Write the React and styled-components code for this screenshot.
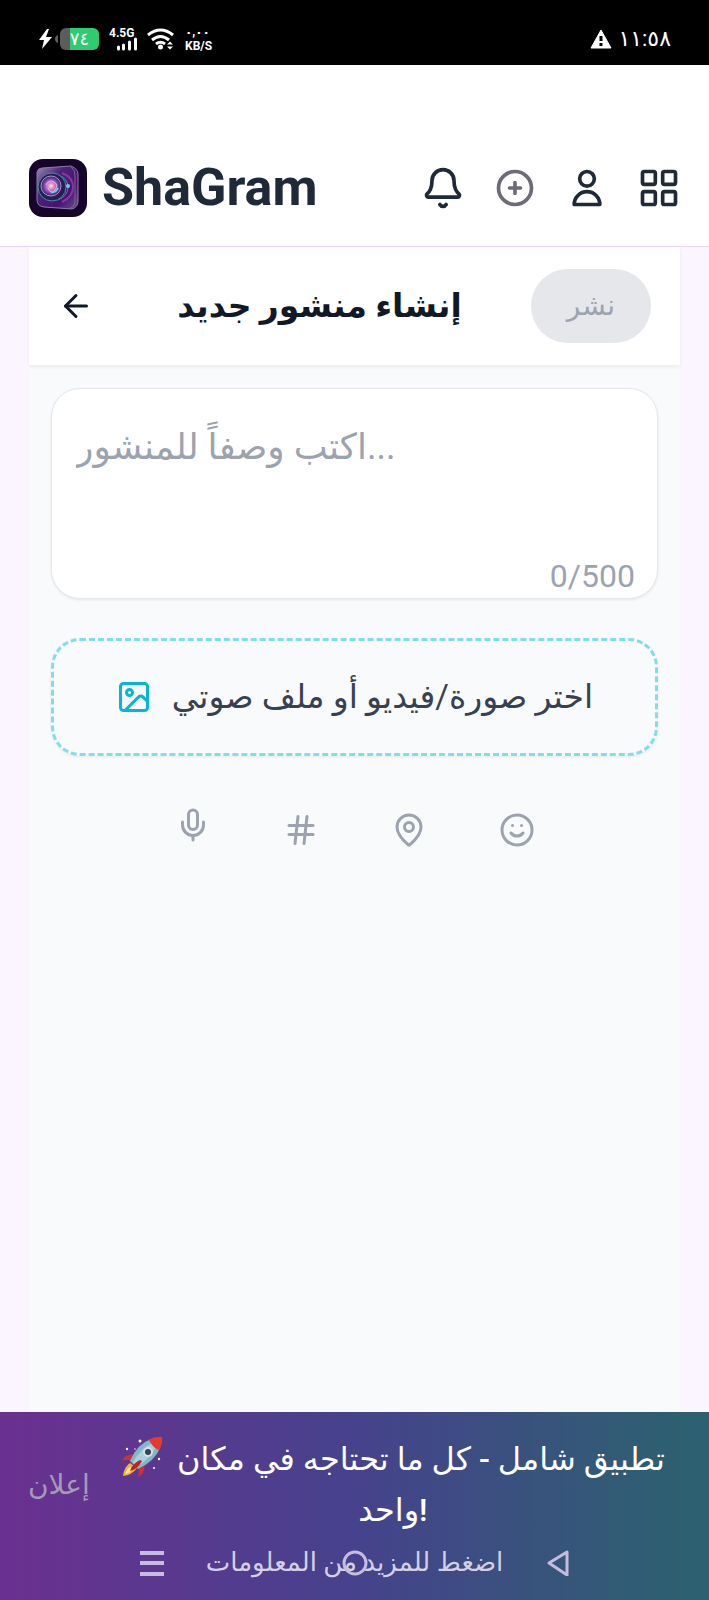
import React, { useState } from 'react';
import styled, { createGlobalStyle } from 'styled-components';
import { ArrowLeft, Bell, Hash, Image, LayoutGrid, MapPin, Mic, Smile } from 'lucide-react';

const GlobalStyle = createGlobalStyle`
  * {
    box-sizing: border-box;
  }
  body {
    margin: 0;
    background: #faf5ff;
    font-family: Roboto, 'Noto Sans', 'DejaVu Sans', sans-serif;
    font-size: 32px;
    line-height: 52px;
  }
  svg {
    display: block;
    flex-shrink: 0;
  }
`;

const Page = styled.div`
  min-height: 100vh;
  display: flex;
  flex-direction: column;
`;

const StatusBar = styled.div`
  height: 65px;
  padding: 12px 38px 0;
  display: flex;
  align-items: center;
  justify-content: space-between;
  background: #000;
  color: #fff;
`;

const StatusGroup = styled.div`
  display: flex;
  align-items: center;
  gap: ${props => props.$gap}px;
`;

const Battery = styled.div`
  width: 39px;
  height: 22px;
  border-radius: 6px;
  background: linear-gradient(to right, #5c5c5c 10px, #2ecc71 10px);
  font-size: 18px;
  line-height: 22px;
  text-align: center;
`;

const Network = styled.div`
  display: flex;
  flex-direction: column;
  font-size: 12px;
  font-weight: 700;
  line-height: 14px;
`;

const Clock = styled.time`
  font-size: 22px;
  line-height: 24px;
`;

const Header = styled.header`
  padding: 94px 28px 29px 29px;
  display: flex;
  align-items: center;
  justify-content: space-between;
  background: #fff;
  border-bottom: 1px solid #e9d5ff;
`;

const Brand = styled.div`
  display: flex;
  align-items: center;
  gap: 15px;
  color: #1f2937;
  font-size: 52px;
  font-weight: 700;
  line-height: 58px;
`;

const Actions = styled.nav`
  display: flex;
  gap: 28px;
`;

const IconButton = styled.button`
  display: inline-flex;
  padding: ${props => props.$pad || 0}px;
  border: 0;
  background: none;
  color: ${props => props.$color || '#1f2937'};
`;

const Main = styled.main`
  flex: 1;
  margin: 0 29px;
  background: #f8fafc;
`;

const TitleBar = styled.div`
  padding: 22px 29px 22px 15px;
  display: flex;
  align-items: center;
  justify-content: space-between;
  background: #fff;
  box-shadow: 0 2px 4px rgba(0, 0, 0, 0.06);
`;

const Title = styled.h1`
  margin: 0;
  color: #111827;
  font-size: 33px;
  font-weight: 700;
`;

const PublishButton = styled.button`
  width: 120px;
  height: 74px;
  border: 0;
  border-radius: 37px;
  background: #e5e7eb;
  color: #9ca3af;
  font: inherit;
  font-size: 28px;
`;

const Form = styled.form`
  padding: 23px 22px;
`;

const Field = styled.div`
  padding: 32px 22px 0 24px;
  display: flex;
  flex-direction: column;
  background: #fff;
  border: 1px solid #e5e7eb;
  border-radius: 29px;
  box-shadow: 0 1px 3px rgba(0, 0, 0, 0.08);
`;

const Description = styled.textarea`
  height: 134px;
  padding: 0;
  border: 0;
  outline: 0;
  resize: none;
  background: none;
  color: #1f2937;
  font: inherit;
  font-size: 36px;

  &::placeholder {
    color: #9ca3af;
  }
`;

const Counter = styled.span`
  align-self: flex-end;
  color: #9ca3af;
  line-height: 43px;
`;

const MediaButton = styled.button`
  width: 100%;
  height: 118px;
  margin-top: 39px;
  display: flex;
  align-items: center;
  justify-content: center;
  gap: 20px;
  border: 3px dashed #80deea;
  border-radius: 29px;
  background: #f8fafc;
  box-shadow: 0 1px 3px rgba(0, 0, 0, 0.08);
  color: #374151;
  font: inherit;
  font-size: 33px;

  svg {
    color: #06b6d4;
  }
`;

const Tools = styled.div`
  margin-top: 51px;
  display: flex;
  align-items: center;
  justify-content: center;
  gap: 72px;
  line-height: 40px;
`;

const Banner = styled.footer`
  position: relative;
  padding: 22px 28px 12px;
  background: linear-gradient(to right, #6b3091, #46428c 50%, #2d6070 96%);
  color: #fff;
  text-align: center;
`;

const BannerRow = styled.div`
  display: flex;
  align-items: center;
  gap: 15px;
`;

const AdLabel = styled.span`
  color: #a59ab8;
  font-size: 28px;
`;

const BannerTitle = styled.strong`
  flex: 1;
  font-weight: 500;
  line-height: 51px;

  svg {
    display: inline-block;
    margin-right: 6px;
    vertical-align: -8px;
  }
`;

const MoreLink = styled.a`
  display: block;
  color: #d3cfe4;
  font-size: 26px;
  text-decoration: none;
`;

/* system navigation keys float over the banner */
const SystemKeys = styled.div`
  position: absolute;
  left: 0;
  right: 0;
  bottom: 24px;
  display: flex;
  justify-content: center;
  gap: 177px;
  color: #c6bcdf;
`;

const Logo = () => (
  <svg width="58" height="58" viewBox="0 0 58 58">
    <defs>
      <linearGradient id="body" x1="0" y1="0" x2="1" y2="1">
        <stop offset="0" stopColor="#9c8bb5" />
        <stop offset="0.35" stopColor="#4b2478" />
        <stop offset="0.7" stopColor="#4a126f" />
        <stop offset="1" stopColor="#6d5392" />
      </linearGradient>
      <radialGradient id="lens">
        <stop offset="0" stopColor="#fbe3d8" />
        <stop offset="0.3" stopColor="#e08cc0" />
        <stop offset="0.65" stopColor="#8a4fc0" />
        <stop offset="1" stopColor="#27215c" />
      </radialGradient>
    </defs>
    <rect width="58" height="58" rx="14" fill="#16042b" />
    <path d="M8 13q1-4 5-4l29-2q7 3 7 8v27q0 6-6 8l-28-2q-7-1-7-7z" fill="url(#body)" stroke="#8d7ca8" strokeWidth="1" />
    <path d="M42 8q4 3 4 8v26q0 5-4 7" fill="none" stroke="#7b6499" strokeWidth="1" />
    <path d="M33 14q11 4 11 14T33 43" fill="none" stroke="#8a35a5" strokeWidth="2" />
    <path d="M29 16q10 3 10 12t-10 13" fill="none" stroke="#3d8fb2" strokeWidth="1" />
    <circle cx="23" cy="28" r="14" fill="#24204f" stroke="#4e8aa5" strokeWidth="1" />
    <circle cx="22" cy="27" r="10" fill="url(#lens)" stroke="#b490d0" strokeWidth="1" />
    <path d="M17 26q3-6 8-3t1 8-7-2" fill="none" stroke="#f2b2d2" strokeWidth="1" />
    <path d="M22 33q5 1 7-4" fill="none" stroke="#67cfe6" strokeWidth="2" />
    <circle cx="39" cy="27" r="2" fill="#65cfe0" />
  </svg>
);

const HeaderIcon = ({ d }) => (
  <svg width="44" height="44" viewBox="0 0 24 24" fill="none" stroke="currentColor" strokeWidth="2" strokeLinecap="round" strokeLinejoin="round">
    <path d={d} />
  </svg>
);

const Rocket = () => (
  <svg width="42" height="42" viewBox="0 0 42 42" role="img" aria-label="rocket">
    <path d="M14 19Q5 17 1 25q5-2 11 0zM23 28q2 9-6 13 2-6-1-11z" fill="#cf3030" />
    <path d="M9 27q-6 4-7 13 9-1 14-8z" fill="#f8b133" />
    <path d="M9 31q-4 3-5 7 5-1 8-5z" fill="#fff3a6" />
    <path d="M9 25Q16 8 30 3l9 9Q34 25 17 33z" fill="#83b5c8" />
    <path d="M12 26Q20 12 33 6l3 3Q30 22 16 31z" fill="#a9d0dc" />
    <path d="M28 4Q34 0 41 1q1 7-3 13-6-2-10-10z" fill="#e33b2e" />
    <circle cx="27" cy="16" r="5" fill="#d5e1e6" />
    <circle cx="27" cy="16" r="3" fill="#37444e" />
    <path d="M19 24q-8 4-10 11 8-2 12-10z" fill="#b82525" />
    <g fill="#fff">
      <circle cx="19" cy="5" r="1.5" />
      <circle cx="6" cy="13" r="1.2" />
      <circle cx="38" cy="23" r="1.2" />
      <circle cx="33" cy="32" r="1" />
      <circle cx="14" cy="13" r="0.7" />
    </g>
  </svg>
);

const Status = () => (
  <StatusBar>
    <StatusGroup $gap={10}>
      <StatusGroup $gap={2}>
        <svg width="15" height="20" viewBox="0 0 15 20" fill="#fff">
          <path d="M9 0 1 11h5L4 20l10-12H8l3-8z" />
        </svg>
        <svg width="3" height="8" viewBox="0 0 3 8" fill="#5c5c5c">
          <path d="M3 0Q0 1 0 4t3 4z" />
        </svg>
        <Battery>٧٤</Battery>
      </StatusGroup>
      <Network>
        <span>4.5G</span>
        <svg width="28" height="12" viewBox="0 0 28 12" overflow="visible" fill="none" stroke="#fff" strokeWidth="3" strokeLinecap="round">
          <path d="M9.500 7v2M14.500 5v4M20.500 2v7M26.500-1v10" />
        </svg>
      </Network>
      <svg width="28" height="22" viewBox="0 0 28 22" fill="none" stroke="#fff" strokeWidth="3">
        <path d="M1 7q12.500-10 25 0M5 12q8.500-7 17 0M9 16q4.500-3.500 9 0" />
        <circle cx="13.500" cy="19" r="2.500" fill="#fff" stroke="none" />
        <path d="m20 16.500 3-3 3 3zM20 18.500l3 3 3-3z" fill="#fff" stroke="none" />
      </svg>
      <Network>
        <span>٠,٠٠</span>
        <span>KB/S</span>
      </Network>
    </StatusGroup>
    <StatusGroup $gap={6}>
      <svg width="22" height="20" viewBox="0 0 22 20">
        <path d="M11 1 21 19H1z" fill="#fff" stroke="#fff" strokeLinejoin="round" />
        <path d="M11 7v5M11 14v3" stroke="#000" strokeWidth="3" />
      </svg>
      <Clock>١١:٥٨</Clock>
    </StatusGroup>
  </StatusBar>
);

const Keys = () => (
  <SystemKeys>
    <svg width="26" height="26" viewBox="0 0 26 26" stroke="currentColor" strokeWidth="4">
      <path d="M1 3h24M1 13h24M1 24h24" />
    </svg>
    <svg width="26" height="26" viewBox="0 0 26 26" fill="none" stroke="currentColor" strokeWidth="3">
      <circle cx="13" cy="13" r="11" />
    </svg>
    <svg width="26" height="26" viewBox="0 0 26 26" fill="none" stroke="currentColor" strokeWidth="3" strokeLinejoin="round">
      <path d="M22 2v23L4 13z" />
    </svg>
  </SystemKeys>
);

const App = () => {
  const [text, setText] = useState('');

  return (
    <Page>
      <GlobalStyle />
      <Status />
      <Header>
        <Brand>
          <Logo />
          ShaGram
        </Brand>
        <Actions>
          <IconButton aria-label="الإشعارات"><Bell size={44} /></IconButton>
          <IconButton aria-label="إضافة" $color="#6b6c76">
            <HeaderIcon d="M12 9v6m3-3H9m12 0a9 9 0 11-18 0 9 9 0 0118 0z" />
          </IconButton>
          <IconButton aria-label="الحساب">
            <HeaderIcon d="M16 7a4 4 0 11-8 0 4 4 0 018 0zM12 14a7 7 0 00-7 7h14a7 7 0 00-7-7z" />
          </IconButton>
          <IconButton aria-label="القائمة"><LayoutGrid size={44} /></IconButton>
        </Actions>
      </Header>
      <Main>
        <TitleBar>
          <IconButton aria-label="رجوع" $color="#111827" $pad={14}><ArrowLeft size={36} /></IconButton>
          <Title>إنشاء منشور جديد</Title>
          <PublishButton form="post" disabled>نشر</PublishButton>
        </TitleBar>
        <Form id="post">
          <Field>
            <Description
              aria-label="وصف المنشور"
              placeholder="اكتب وصفاً للمنشور..."
              maxLength={500}
              value={text}
              onChange={e => setText(e.target.value)}
            />
            <Counter>{text.length}/500</Counter>
          </Field>
          <MediaButton type="button">
            <Image size={36} />
            اختر صورة/فيديو أو ملف صوتي
          </MediaButton>
          <Tools>
            <div>
              <IconButton type="button" aria-label="تسجيل" $color="#9ca3af"><Mic size={36} /></IconButton>
            </div>
            <IconButton type="button" aria-label="وسم" $color="#9ca3af"><Hash size={36} /></IconButton>
            <IconButton type="button" aria-label="الموقع" $color="#9ca3af"><MapPin size={36} /></IconButton>
            <IconButton type="button" aria-label="رموز" $color="#9ca3af"><Smile size={36} /></IconButton>
          </Tools>
        </Form>
      </Main>
      <Banner>
        <BannerRow>
          <AdLabel>إعلان</AdLabel>
          <BannerTitle><Rocket /> تطبيق شامل - كل ما تحتاجه في مكان واحد!</BannerTitle>
        </BannerRow>
        <MoreLink href="#more">اضغط للمزيد من المعلومات</MoreLink>
        <Keys />
      </Banner>
    </Page>
  );
};

export default App;
